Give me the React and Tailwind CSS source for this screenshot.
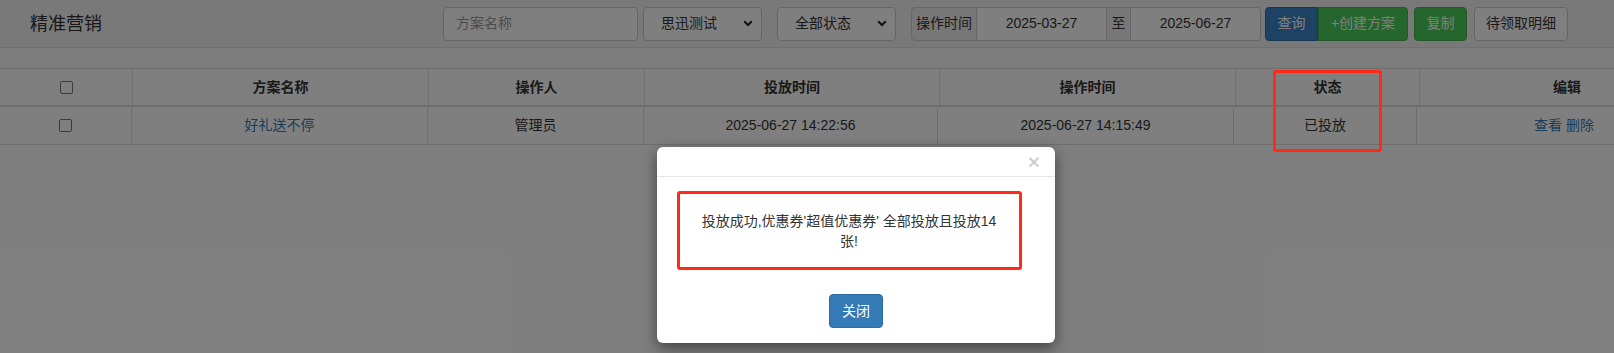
import React from "react";

const headCols = "grid grid-cols-[133px_296px_216px_295px_296px_184px_294px]";
const bodyCols = "grid grid-cols-[132px_296px_216px_294px_296px_183px_294px]";

function Checkbox() {
  return <div className="h-[13px] w-[13px] rounded-[2px] border border-[#767676] bg-white" />;
}

function Chevron() {
  return (
    <svg width="10" height="7" viewBox="0 0 10 7" className="text-[#222]">
      <polyline points="1.2,1.2 5,5 8.8,1.2" fill="none" stroke="currentColor" strokeWidth="2" />
    </svg>
  );
}

function SelectBox({ label }) {
  return (
    <div className="flex h-[34px] w-[119px] items-center justify-between rounded-[4px] border border-[#ccc] bg-white pl-[17px] pr-[8px] text-[#333]">
      <span>{label}</span>
      <Chevron />
    </div>
  );
}

export default function App() {
  return (
    <div className="relative h-[353px] w-[1614px] overflow-hidden bg-white font-['Liberation_Sans','Noto_Sans_CJK_SC',sans-serif] text-[14px] text-[#333]">
      <header className="flex h-[48px] items-center rounded-tl-[4px] border-b border-[#e0e0e0] bg-[#f3f3f3]">
        <h1 className="pl-[30px] text-[18px] leading-none font-normal text-[#333]">精准营销</h1>
        <div className="ml-auto flex items-center pr-[46px]">
          <div className="flex h-[34px] w-[195px] items-center rounded-[4px] border border-[#ccc] bg-white px-[12px] text-[#999]">
            方案名称
          </div>
          <div className="ml-[5px]">
            <SelectBox label="思迅测试" />
          </div>
          <div className="ml-[15px]">
            <SelectBox label="全部状态" />
          </div>
          <div className="ml-[15px] flex h-[34px] items-stretch">
            <div className="flex w-[66px] items-center justify-center rounded-l-[4px] border border-[#ccc] bg-[#eee]">操作时间</div>
            <div className="flex w-[129px] items-center justify-center border-y border-[#ccc] bg-white">2025-03-27</div>
            <div className="flex w-[25px] items-center justify-center border border-[#ccc] bg-[#eee]">至</div>
            <div className="flex w-[130px] items-center justify-center rounded-r-[4px] border-y border-r border-[#ccc] bg-white">2025-06-27</div>
          </div>
          <button type="button" className="ml-[4px] h-[34px] w-[53px] rounded-l-[4px] border border-[#2e6da4] bg-[#3a84c8] text-white">查询</button>
          <button type="button" className="h-[34px] w-[90px] rounded-r-[4px] border border-[#4cae4c] bg-[#48cd58] text-white">+创建方案</button>
          <button type="button" className="ml-[6px] h-[34px] w-[53px] rounded-[4px] border border-[#4cae4c] bg-[#48cd58] text-white">复制</button>
          <button type="button" className="ml-[7px] h-[34px] w-[94px] rounded-[4px] border border-[#ccc] bg-white text-[#333]">待领取明细</button>
        </div>
      </header>

      <div className="h-[20px] bg-[#f9f9f9]" />

      <div className="w-[1714px] border-t border-[#ddd]">
        <div className={`${headCols} h-[38px] border-b-2 border-[#ddd] font-bold`}>
          <div className="flex items-center justify-center border-r border-[#ddd]"><Checkbox /></div>
          <div className="flex items-center justify-center border-r border-[#ddd]">方案名称</div>
          <div className="flex items-center justify-center border-r border-[#ddd]">操作人</div>
          <div className="flex items-center justify-center border-r border-[#ddd]">投放时间</div>
          <div className="flex items-center justify-center border-r border-[#ddd]">操作时间</div>
          <div className="flex items-center justify-center border-r border-[#ddd]">状态</div>
          <div className="flex items-center justify-center">编辑</div>
        </div>
        <div className={`${bodyCols} h-[38px] border-b border-[#ddd]`}>
          <div className="flex items-center justify-center border-r border-[#ddd]"><Checkbox /></div>
          <div className="flex items-center justify-center border-r border-[#ddd] text-[#337ab7]">好礼送不停</div>
          <div className="flex items-center justify-center border-r border-[#ddd]">管理员</div>
          <div className="flex items-center justify-center border-r border-[#ddd]">2025-06-27 14:22:56</div>
          <div className="flex items-center justify-center border-r border-[#ddd]">2025-06-27 14:15:49</div>
          <div className="flex items-center justify-center border-r border-[#ddd]">已投放</div>
          <div className="flex items-center justify-center gap-[4px] text-[#337ab7]">
            <span>查看</span>
            <span>删除</span>
          </div>
        </div>
      </div>

      {/* backdrop */}
      <div className="absolute inset-0 bg-black/50" />

      {/* annotation around status column */}
      <div className="absolute left-[1273px] top-[70px] h-[82px] w-[109px] rounded-[3px] border-[3px] border-[#ff2a1a]" />

      {/* modal */}
      <div className="absolute left-[657px] top-[147px] flex h-[196px] w-[398px] flex-col rounded-[6px] bg-white shadow-[0_5px_15px_rgba(0,0,0,0.5)]">
        <div className="flex h-[30px] items-center justify-end border-b border-[#e5e5e5] pr-[15px]">
          <span className="text-[21px] leading-none font-bold text-black/20">×</span>
        </div>
        <div className="flex justify-center pt-[14px] pr-[14px]">
          <div className="flex h-[79px] w-[345px] items-center justify-center rounded-[3px] border-[3px] border-[#ff2a1a] text-center leading-[20px] text-[#333]">
            <p>
              投放成功,优惠券'超值优惠券' 全部投放且投放14
              <br />
              张!
            </p>
          </div>
        </div>
        <div className="flex justify-center pt-[24px]">
          <button type="button" className="h-[34px] w-[54px] rounded-[4px] border border-[#2e6da4] bg-[#337ab7] text-white">关闭</button>
        </div>
      </div>
    </div>
  );
}
